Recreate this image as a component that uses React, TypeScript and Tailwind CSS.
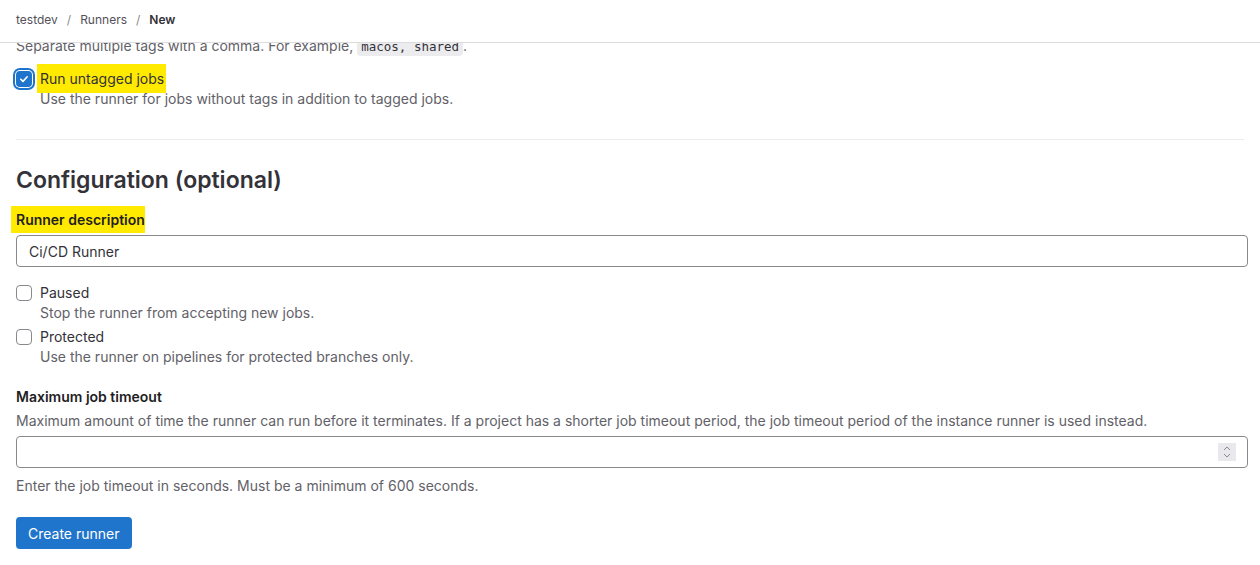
import { type FC, type ReactNode } from 'react'

const font = { fontFamily: 'Inter, "Noto Sans", sans-serif' }

// small checkbox row used by the form
const CheckRow: FC<{ checked?: boolean; label: ReactNode; help: string; className?: string }> = ({
  checked,
  label,
  help,
  className,
}) => (
  <div className={`flex ${className ?? ''}`}>
    <div className="w-6 flex-shrink-0 pt-[2px]">
      {checked ? (
        <span className="flex h-4 w-4 items-center justify-center rounded-[4px] bg-[#1f75cb] shadow-[0_0_0_1px_#fff,0_0_0_3px_#1f75cb]">
          <svg width="10" height="10" viewBox="0 0 10 10" fill="none">
            <path d="M1.8 5.2l2.2 2.2 4.2-4.6" stroke="#fff" strokeWidth="1.6" strokeLinecap="round" strokeLinejoin="round" />
          </svg>
        </span>
      ) : (
        <span className="block h-4 w-4 rounded-[4px] border border-[#89888d] bg-white" />
      )}
    </div>
    <div>
      <div className="text-[14px] leading-5 text-[#333238]">{label}</div>
      <div className="text-[14px] leading-5 text-[#626168]">{help}</div>
    </div>
  </div>
)

export default function App() {
  return (
    <div className="min-h-[565px] w-full bg-white" style={font}>
      {/* breadcrumb bar */}
      <div className="flex h-[43px] items-center border-b border-[#dcdcde] px-4 pb-[2px] text-[12px] text-[#535158]">
        <span>testdev</span>
        <span className="mx-[9px] text-[#89888d]">/</span>
        <span>Runners</span>
        <span className="mx-[9px] text-[#89888d]">/</span>
        <span className="font-semibold text-[#333238]">New</span>
      </div>

      <div className="pl-4 pr-3">
        {/* line scrolled under the header */}
        <div className="h-[13px] overflow-hidden">
          <div className="-mt-[7px] text-[14px] leading-5 text-[#626168]">
            Separate multiple tags with a comma. For example,{' '}
            <code
              className="rounded-[4px] bg-[#ececef] px-1 py-[2px] text-[12.5px] text-[#333238]"
              style={{ fontFamily: '"DejaVu Sans Mono", "Liberation Mono", monospace' }}
            >
              macos, shared
            </code>
            .
          </div>
        </div>

        <CheckRow
          checked
          className="mt-[13px]"
          label={<span className="-ml-[3px] bg-[#ffea00] py-[6px] pl-[3px] pr-[2px]">Run untagged jobs</span>}
          help="Use the runner for jobs without tags in addition to tagged jobs."
        />

        <div className="mr-1 mt-[30px] border-t border-[#ececef]" />

        <h2 className="mt-[24px] text-[23px] font-semibold leading-8 text-[#333238]">Configuration (optional)</h2>

        <div className="mt-[14px] text-[14px] font-semibold leading-5 text-[#1f1e24]">
          <span className="-ml-[5px] bg-[#ffea00] py-[5px] pl-[5px]">Runner description</span>
        </div>
        <div className="mt-[5px] flex h-8 items-center rounded-[4px] border border-[#89888d] px-3 text-[14px] text-[#333238]">
          Ci/CD Runner
        </div>

        <CheckRow className="mt-[16px]" label="Paused" help="Stop the runner from accepting new jobs." />
        <CheckRow className="mt-[4px]" label="Protected" help="Use the runner on pipelines for protected branches only." />

        <div className="mt-[20px] text-[14px] font-semibold leading-5 text-[#1f1e24]">Maximum job timeout</div>
        <div className="mt-[4px] text-[14px] leading-5 text-[#626168]">
          Maximum amount of time the runner can run before it terminates. If a project has a shorter job timeout period, the job timeout period of the instance runner is used instead.
        </div>
        <div className="mt-[5px] flex h-8 items-center rounded-[4px] border border-[#89888d] pl-3 pr-[11px]">
          <input className="min-w-0 flex-1 bg-transparent text-[14px] outline-none" style={font} />
          <span className="flex h-[18px] w-[18px] flex-col items-center justify-center gap-[2px] bg-[#e9e9ed]">
            <svg width="8" height="5" viewBox="0 0 8 5" fill="none">
              <path d="M1 4l3-3 3 3" stroke="#8a8a8f" strokeWidth="1" />
            </svg>
            <svg width="8" height="5" viewBox="0 0 8 5" fill="none">
              <path d="M1 1l3 3 3-3" stroke="#8a8a8f" strokeWidth="1" />
            </svg>
          </span>
        </div>
        <div className="mt-[8px] text-[14px] leading-5 text-[#626168]">
          Enter the job timeout in seconds. Must be a minimum of 600 seconds.
        </div>

        <button className="mt-[21px] flex h-8 items-center rounded-[4px] bg-[#1f75cb] px-3 text-[14px] text-white">
          Create runner
        </button>
      </div>
    </div>
  )
}
